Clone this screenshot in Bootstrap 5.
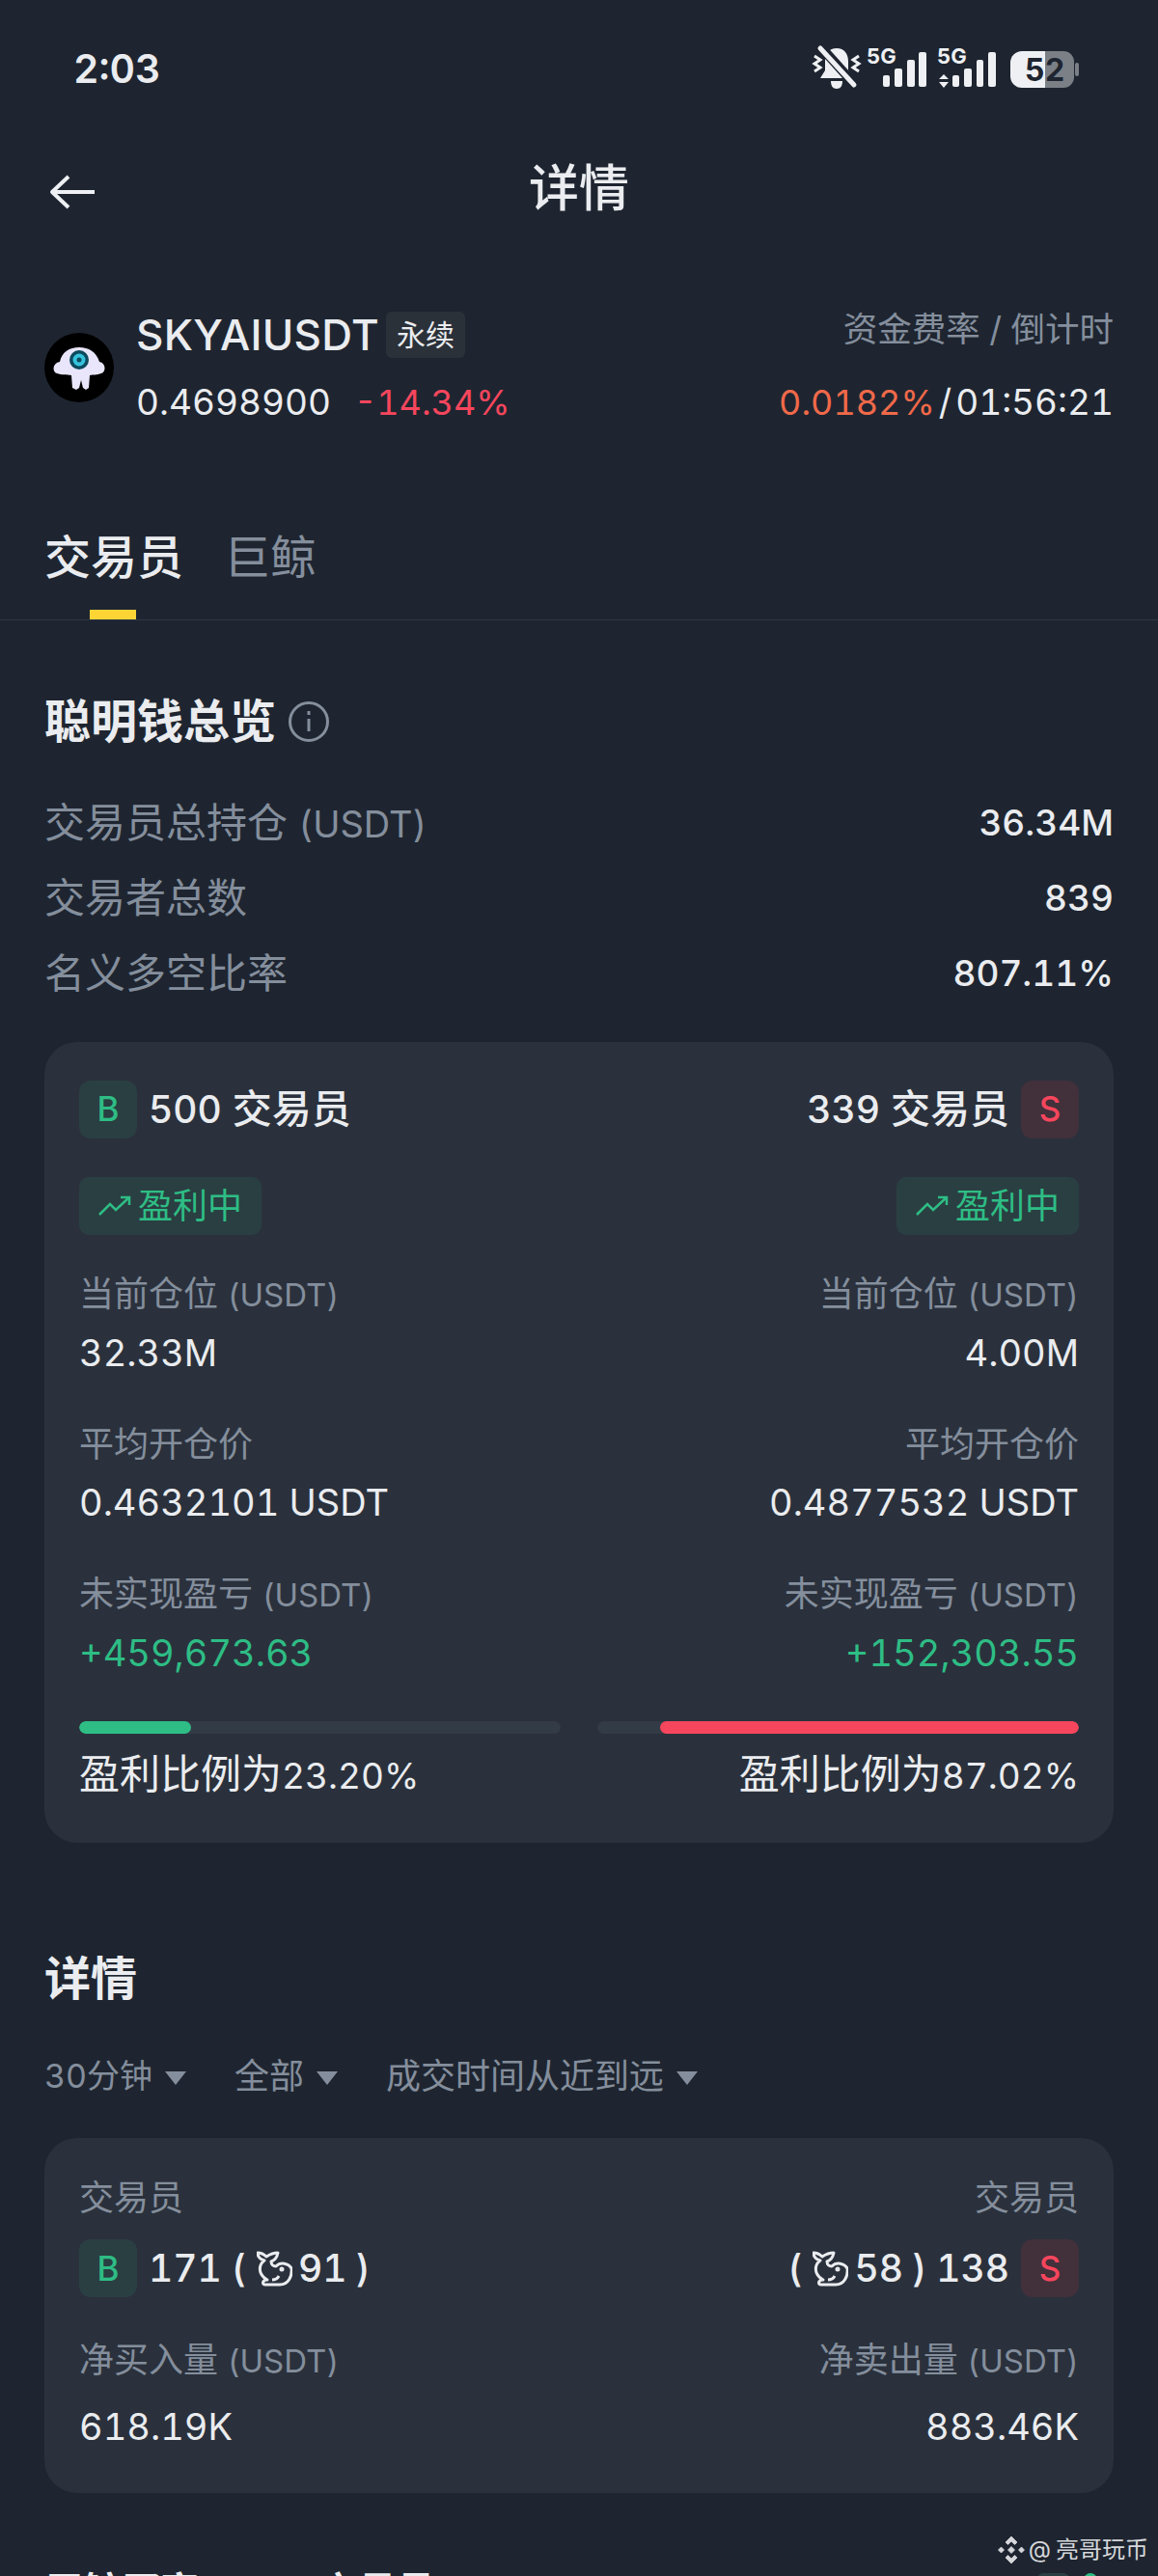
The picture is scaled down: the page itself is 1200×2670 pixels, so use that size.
<!DOCTYPE html>
<html lang="zh-CN">
<head>
  <meta charset="UTF-8" />
  <meta name="viewport" content="width=device-width, initial-scale=1.0"/>
  <title>详情</title>
  <link href="https://cdn.jsdelivr.net/npm/bootstrap@5.3.0/dist/css/bootstrap.min.css" rel="stylesheet"/>
  <style>
    html, body { height: 2670px; overflow: hidden; }
    body {
      background: #1e2530;
      color: #eaecef;
      font-family: Inter, "Noto Sans CJK SC", sans-serif;
      font-size: 38px;
      font-variant-numeric: tabular-nums;
      position: relative;
    }
    .muted-txt { color: #848e9c; }
    .up-txt { color: #2ebd85; }
    .down-txt { color: #f6465d; }
    .change-txt { font-size: 36px; }

    .status-row { height: 146px; padding: 45px 80px 0 76px; }
    .status-time { font-size: 41px; font-weight: 600; line-height: 52px; }
    .status-icons { margin-top: 1px; }

    .title-row { height: 100px; position: relative; }
    .title-txt { font-size: 52px; font-weight: 500; line-height: 100px; text-align: center; }
    .back-btn { position: absolute; left: 51px; top: 35px; }

    .ticker-row { padding: 73px 46px 0; height: 296px; }
    .coin-logo { width: 72px; height: 72px; margin-top: 26px; margin-right: 23px; flex: none; }
    .ticker-name { font-size: 44px; font-weight: 500; line-height: 56px; letter-spacing: .3px; }
    .perp-tag {
      font-size: 30px; line-height: 48px; height: 48px; padding: 0 11px;
      background: #2b3139; border-radius: 6px; margin-left: 7px;
    }
    .ticker-sub { font-size: 37px; line-height: 50px; margin-top: 17px; }
    .funding-label { font-size: 35.5px; line-height: 46px; }
    .funding-sub { margin-top: 27px; }

    .tab-row { height: 101px; padding: 0 46px; border-bottom: 1px solid #2f3742; gap: 42px; position: relative; }
    .tab-item { font-size: 48px; line-height: 72px; position: relative; height: 100px; color: #848e9c; }
    .tab-item.is-active { color: #eaecef; font-weight: 500; }
    .tab-item.is-active::after {
      content: ""; position: absolute; left: 47px; bottom: 0; width: 48px; height: 10px; background: #fcd535;
    }

    .main-wrap { padding: 0 46px; }
    .sec-title { font-size: 48px; font-weight: 600; line-height: 60px; }
    .info-icon { margin-left: 12px; }
    .kv-row { font-size: 42px; line-height: 50px; height: 78px; }
    .kv-val { font-size: 37px; font-weight: 500; }
    .unit-txt { font-size: 38px; }

    .panel-box { background: #2a313c; border-radius: 34px; padding: 0 36px; }
    .side-tag {
      width: 60px; height: 60px; border-radius: 12px; font-size: 35px; font-weight: 500;
      display: flex; align-items: center; justify-content: center; flex: none;
    }
    .side-tag.buy-tag { background: #2a3f42; color: #2ebd85; }
    .side-tag.sell-tag { background: #42303b; color: #f6465d; }
    .count-txt { font-size: 41px; font-weight: 500; line-height: 60px; }
    .count-num { font-size: 39px; }
    .count-row { gap: 12px; }
    .profit-tag {
      background: #2a3f42; color: #2ebd85; border-radius: 10px; height: 60px;
      font-size: 36px; line-height: 60px; padding: 0 20px; gap: 7px;
    }
    .field-label { font-size: 36px; line-height: 44px; }
    .field-label .unit-txt { font-size: 33px; }
    .field-val { font-size: 38px; line-height: 50px; margin-top: 13px; }
    .bar-track { height: 13px; flex: 1 1 0; background: #333b46; border-radius: 7px; overflow: hidden; display: flex; }
    .bar-fill { height: 100%; border-radius: 7px; }
    .ratio-txt { font-size: 42px; line-height: 50px; }
    .ratio-num { font-size: 37px; }

    .filter-row { font-size: 36px; line-height: 44px; gap: 50px; }
    .filter-short { font-size: 34px; }
    .caret-down { width: 0; height: 0; border-left: 11px solid transparent; border-right: 11px solid transparent; border-top: 14px solid #848e9c; margin-left: 13px; margin-top: 4px; }

    .cut-row { font-size: 40px; font-weight: 600; line-height: 60px; }
    .cut-gap { margin-left: 125px; }
    .cut-tag { width: 33px; height: 20px; background: #2a3f42; border-radius: 6px; margin-top: 11px; }
    .cut-dot { width: 14px; height: 14px; background: #2ebd85; border-radius: 50%; margin-top: 11px; margin-left: 15px; margin-right: 17px; }

    .whale-icon { margin: 0 6px 0 11px; flex: none; }
    .open-paren { margin-left: 10px; }
    .close-paren { margin-left: 9px; }
    .watermark { position: absolute; right: 10px; top: 2625px; font-size: 24px; line-height: 36px; color: #d5d7da; }
    .wm-logo { margin-right: 4px; }
    .wm-at { margin-right: 5px; }
  </style>
</head>
<body>

  <!-- status bar -->
  <div class="status-row d-flex justify-content-between align-items-start">
    <div class="status-time">2:03</div>
    <svg class="status-icons" width="280" height="48" viewBox="840 46 280 48">
      <g fill="#eef0f3">
        <path d="M867 50c8 0 12 6 12 14v9l5 8h-34l5-8v-9c0-8 4-14 12-14zM861 84h12c0 5-2 8-6 8s-6-3-6-8z"/>
        <rect x="915" y="78" width="7" height="12" rx="2"/>
        <rect x="927" y="71" width="8" height="19" rx="2"/>
        <rect x="940" y="62" width="8" height="28" rx="2"/>
        <rect x="952" y="54" width="8" height="36" rx="2"/>
        <rect x="987" y="78" width="7" height="12" rx="2"/>
        <rect x="999" y="71" width="8" height="19" rx="2"/>
        <rect x="1012" y="62" width="7" height="28" rx="2"/>
        <rect x="1024" y="54" width="8" height="36" rx="2"/>
        <path d="M978 77l5 5h-10zM978 91l5-6h-10z"/>
        <path d="M1059 53h43a11 11 0 0 1 11 11v16a11 11 0 0 1-11 11h-43z" fill="#7b8087"/>
        <rect x="1114" y="65" width="4" height="14" rx="2" fill="#7b8087"/>
        <path d="M1059 53h24v38h-24a12 12 0 0 1-12-12V65a12 12 0 0 1 12-12z"/>
      </g>
      <path d="M844 58l6 4-6 4 6 4-6 4M890 58l-6 4 6 4-6 4 6 4" fill="none" stroke="#eef0f3" stroke-width="3"/>
      <path d="M850 48l36 40" stroke="#1e2530" stroke-width="10"/>
      <path d="M850 50l35 38" stroke="#eef0f3" stroke-width="5" stroke-linecap="round"/>
      <text x="898" y="66" font-family="Inter" font-size="22" font-weight="700" fill="#eef0f3">5G</text>
      <text x="971" y="66" font-family="Inter" font-size="22" font-weight="700" fill="#eef0f3">5G</text>
      <text x="1062" y="84" font-family="Inter" font-size="32" font-weight="700" fill="#1e2530">52</text>
    </svg>
  </div>

  <!-- title bar -->
  <div class="title-row">
    <svg class="back-btn" width="48" height="36" viewBox="0 0 48 36" fill="none" stroke="#eef0f3" stroke-width="4" stroke-linejoin="round">
      <path d="M47 18H3M20 2L3 18l17 16"/>
    </svg>
    <div class="title-txt">详情</div>
  </div>

  <!-- ticker -->
  <div class="ticker-row d-flex justify-content-between">
    <div class="d-flex">
      <svg class="coin-logo" viewBox="0 0 72 72">
        <circle cx="36" cy="36" r="36" fill="#000"/>
        <path d="M13 42c-5-1-5-11 3-12 2-10 10-15 20-15s18 5 21 15c7 1 7 11 2 12-5 2-8 1-12 2l-1 13-3 2-3-2-2-8-2 8-3 2-4-2-1-13c-5-1-10 0-15-2z" fill="#e9e6fb"/>
        <circle cx="36" cy="28" r="10" fill="#0d4a5e"/>
        <circle cx="36" cy="28" r="6.500" fill="#36c3dc"/>
        <circle cx="36" cy="28" r="2.500" fill="#0d4a5e"/>
      </svg>
      <div>
        <div class="d-flex align-items-center">
          <span class="ticker-name">SKYAIUSDT</span>
          <span class="perp-tag">永续</span>
        </div>
        <div class="ticker-sub d-flex align-items-center">
          <span>0.4698900</span>
          <span class="down-txt change-txt ms-4">-14.34%</span>
        </div>
      </div>
    </div>
    <div class="text-end">
      <div class="funding-label muted-txt">资金费率 / 倒计时</div>
      <div class="ticker-sub funding-sub"><span class="change-txt" style="color:#f0694a">0.0182%</span><span class="ms-1">/</span><span class="ms-1">01:56:21</span></div>
    </div>
  </div>

  <!-- tabs -->
  <div class="tab-row d-flex">
    <div class="tab-item is-active">交易员</div>
    <div class="tab-item">巨鲸</div>
  </div>

  <div class="main-wrap">
    <div class="sec-title d-flex align-items-center" style="margin-top:75px">
      聪明钱总览
      <svg class="info-icon" width="44" height="44" viewBox="0 0 44 44" fill="none" stroke="#848e9c" stroke-width="3">
        <circle cx="22" cy="22" r="19.500"/>
        <path d="M22 19v13M22 11v4"/>
      </svg>
    </div>

    <div style="margin-top:36px">
      <div class="kv-row d-flex justify-content-between align-items-center"><span class="muted-txt">交易员总持仓 <span class="unit-txt">(USDT)</span></span><span class="kv-val">36.34M</span></div>
      <div class="kv-row d-flex justify-content-between align-items-center"><span class="muted-txt">交易者总数</span><span class="kv-val">839</span></div>
      <div class="kv-row d-flex justify-content-between align-items-center"><span class="muted-txt">名义多空比率</span><span class="kv-val">807.11%</span></div>
    </div>

    <!-- smart money panel -->
    <div class="panel-box" style="margin-top:32px;padding-top:39px;height:830px">
      <div class="d-flex justify-content-between">
        <div class="d-flex align-items-center count-row">
          <div class="side-tag buy-tag">B</div><span class="count-txt"><span class="count-num">500</span> 交易员</span>
        </div>
        <div class="d-flex align-items-center count-row">
          <span class="count-txt"><span class="count-num">339</span> 交易员</span><div class="side-tag sell-tag">S</div>
        </div>
      </div>
      <div class="d-flex justify-content-between" style="margin-top:40px">
        <div class="profit-tag d-flex align-items-center">
          <svg width="34" height="22" viewBox="0 0 34 22" fill="none" stroke="#2ebd85" stroke-width="2.500"><path d="M1 20l11-11 6 6 14-13M23 2h9v8"/></svg>盈利中
        </div>
        <div class="profit-tag d-flex align-items-center">
          <svg width="34" height="22" viewBox="0 0 34 22" fill="none" stroke="#2ebd85" stroke-width="2.500"><path d="M1 20l11-11 6 6 14-13M23 2h9v8"/></svg>盈利中
        </div>
      </div>

      <div class="d-flex justify-content-between" style="margin-top:39px">
        <div><div class="field-label muted-txt">当前仓位 <span class="unit-txt">(USDT)</span></div><div class="field-val">32.33M</div></div>
        <div class="text-end"><div class="field-label muted-txt">当前仓位 <span class="unit-txt">(USDT)</span></div><div class="field-val">4.00M</div></div>
      </div>
      <div class="d-flex justify-content-between" style="margin-top:48px">
        <div><div class="field-label muted-txt">平均开仓价</div><div class="field-val">0.4632101 USDT</div></div>
        <div class="text-end"><div class="field-label muted-txt">平均开仓价</div><div class="field-val">0.4877532 USDT</div></div>
      </div>
      <div class="d-flex justify-content-between" style="margin-top:48px">
        <div><div class="field-label muted-txt">未实现盈亏 <span class="unit-txt">(USDT)</span></div><div class="field-val up-txt">+459,673.63</div></div>
        <div class="text-end"><div class="field-label muted-txt">未实现盈亏 <span class="unit-txt">(USDT)</span></div><div class="field-val up-txt">+152,303.55</div></div>
      </div>

      <div class="d-flex" style="margin-top:46px;gap:38px">
        <div class="bar-track"><div class="bar-fill" style="width:23.2%;background:#2ebd85"></div></div>
        <div class="bar-track justify-content-end"><div class="bar-fill" style="width:87.02%;background:#f6465d"></div></div>
      </div>
      <div class="d-flex justify-content-between" style="margin-top:17px">
        <span class="ratio-txt">盈利比例为<span class="ratio-num">23.20%</span></span>
        <span class="ratio-txt">盈利比例为<span class="ratio-num">87.02%</span></span>
      </div>
    </div>

    <!-- details -->
    <div class="sec-title" style="margin-top:111px">详情</div>
    <div class="filter-row d-flex muted-txt" style="margin-top:49px">
      <div class="d-flex align-items-center filter-short">30分钟<span class="caret-down"></span></div>
      <div class="d-flex align-items-center">全部<span class="caret-down"></span></div>
      <div class="d-flex align-items-center">成交时间从近到远<span class="caret-down"></span></div>
    </div>

    <div class="panel-box" style="margin-top:42px;padding-top:40px;height:368px">
      <div class="d-flex justify-content-between">
        <span class="field-label muted-txt">交易员</span>
        <span class="field-label muted-txt">交易员</span>
      </div>
      <div class="d-flex justify-content-between" style="margin-top:21px">
        <div class="d-flex align-items-center count-row">
          <div class="side-tag buy-tag">B</div>
          <span class="count-txt count-num d-flex align-items-center"><span>171</span><span class="open-paren">(</span>
            <svg class="whale-icon" width="37" height="37" viewBox="0 0 37 37" fill="none" stroke="#eaecef" stroke-width="3" stroke-linejoin="round"><path d="M1 2C5 2 8 4 10 6 13 4 17 2 22 2 21 7 18 10 15 11 15 14 17 16 20 16 25 11 33 13 36 18 37 26 33 35 24 35H9C5 35 6 30 11 30 5 27 2 21 4 15 5 12 7 11 8 10 4 9 1 6 1 2Z"/><path d="M16 30C20 30 22 28 23 26"/><circle cx="26" cy="19" r="1" fill="#eaecef"/></svg>91<span class="close-paren">)</span></span>
        </div>
        <div class="d-flex align-items-center count-row">
          <span class="count-txt count-num d-flex align-items-center"><span>(</span>
            <svg class="whale-icon" width="37" height="37" viewBox="0 0 37 37" fill="none" stroke="#eaecef" stroke-width="3" stroke-linejoin="round"><path d="M1 2C5 2 8 4 10 6 13 4 17 2 22 2 21 7 18 10 15 11 15 14 17 16 20 16 25 11 33 13 36 18 37 26 33 35 24 35H9C5 35 6 30 11 30 5 27 2 21 4 15 5 12 7 11 8 10 4 9 1 6 1 2Z"/><path d="M16 30C20 30 22 28 23 26"/><circle cx="26" cy="19" r="1" fill="#eaecef"/></svg>58<span class="close-paren">)</span><span class="open-paren">138</span></span>
          <div class="side-tag sell-tag">S</div>
        </div>
      </div>
      <div class="d-flex justify-content-between" style="margin-top:43px">
        <div><div class="field-label muted-txt">净买入量 <span class="unit-txt">(USDT)</span></div><div class="field-val" style="margin-top:21px">618.19K</div></div>
        <div class="text-end"><div class="field-label muted-txt">净卖出量 <span class="unit-txt">(USDT)</span></div><div class="field-val" style="margin-top:21px">883.46K</div></div>
      </div>
    </div>

    <div class="cut-row d-flex" style="margin-top:72px">
      <span>巨鲸买家</span><span class="cut-gap me-auto">交易员</span>
      <span class="cut-tag"></span><span class="cut-dot"></span>
    </div>
  </div>

  <div class="watermark d-flex align-items-center">
    <svg class="wm-logo" width="28" height="28" viewBox="0 0 28 28" fill="#d5d7da" stroke="#d5d7da" stroke-width=".8"><path d="M14 0l6 6-2.500 2.500L14 5l-3.500 3.500L8 6zM14 28l6-6-2.500-2.500L14 23l-3.500-3.500L8 22zM14 10.500l3.500 3.500-3.500 3.500-3.500-3.500zM3.500 11L6.500 14 3.500 17 .5 14zM24.500 11l3 3-3 3-3-3z"/></svg><span class="wm-at">@</span>亮哥玩币
  </div>

</body>
</html>
